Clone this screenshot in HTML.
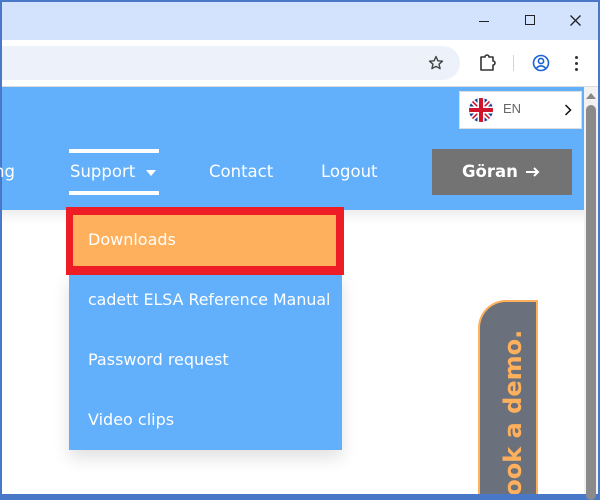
<!DOCTYPE html>
<html><head><meta charset="utf-8"><style>
*{margin:0;padding:0;box-sizing:border-box}
body{width:600px;height:496px;overflow:hidden;background:#4a78c8;position:relative;font-family:"DejaVu Sans","Liberation Sans",sans-serif}
.a{position:absolute}
.t{color:#fff;font-size:16px;white-space:nowrap}
</style></head><body>
<div class="a" style="left:2px;top:2px;width:596px;height:38px;background:#d3e3fd"></div>
<!-- window controls -->
<div class="a" style="left:479px;top:21px;width:10px;height:1px;background:#222"></div>
<div class="a" style="left:525px;top:15px;width:10px;height:10px;border:1.5px solid #222"></div>
<svg class="a" style="left:570px;top:15px" width="11" height="11"><path d="M0.5 0.5L10.5 10.5M10.5 0.5L0.5 10.5" stroke="#222" stroke-width="1.3"/></svg>
<!-- toolbar -->
<div class="a" style="left:2px;top:40px;width:596px;height:47px;background:#fff"></div>
<div class="a" style="left:2px;top:46px;width:458px;height:34px;background:#edf2fa;border-radius:0 17px 17px 0"></div>
<svg class="a" style="left:428px;top:55px" width="16" height="16" viewBox="0 0 16 16"><path d="M8 1.5l1.9 4.3 4.6.4-3.5 3 1.1 4.5L8 11.3 3.9 13.7 5 9.2 1.5 6.2l4.6-.4z" fill="none" stroke="#444" stroke-width="1.4" stroke-linejoin="round"/></svg>
<svg class="a" style="left:478px;top:53px" width="20" height="20" viewBox="0 0 20 20"><path d="M3 4h4a2 2 0 0 1 4 0h4v4a2 2 0 0 1 0 4v5H3z" fill="none" stroke="#333" stroke-width="1.6" stroke-linejoin="round"/></svg>
<div class="a" style="left:513px;top:55px;width:1px;height:16px;background:#c5d5ee"></div>
<svg class="a" style="left:531px;top:53px" width="20" height="20" viewBox="0 0 20 20"><circle cx="10" cy="10" r="7.5" fill="none" stroke="#1a63d4" stroke-width="1.6"/><circle cx="10" cy="8" r="2.6" fill="none" stroke="#1a63d4" stroke-width="1.6"/><path d="M5.5 15.2c2.5-3 6.5-3 9 0" fill="none" stroke="#1a63d4" stroke-width="1.6"/></svg>
<div class="a" style="left:575px;top:56px;width:3px;height:3px;border-radius:2px;background:#333;box-shadow:0 6px 0 #333,0 12px 0 #333"></div>
<div class="a" style="left:2px;top:86px;width:596px;height:1px;background:#dadce0"></div>
<!-- page -->
<div class="a" style="left:2px;top:87px;width:582px;height:407px;background:#fff"></div>
<div class="a" style="left:2px;top:87px;width:582px;height:123px;background:#62b0fb"></div>
<div class="a" style="left:2px;top:210px;width:582px;height:14px;background:linear-gradient(#eee,#fff)"></div>
<!-- scrollbar -->
<div class="a" style="left:584px;top:87px;width:14px;height:407px;background:#f1f1f1"></div>
<svg class="a" style="left:586px;top:93px" width="10" height="6"><path d="M0 6L5 0L10 6z" fill="#888"/></svg>
<div class="a" style="left:586px;top:105px;width:10px;height:395px;background:#8a8a8a;border-radius:5px"></div>
<!-- lang box -->
<div class="a" style="left:459px;top:91px;width:123px;height:38px;background:#fff;border:1px solid #ddd"></div>
<svg class="a" style="left:469px;top:98px" width="24" height="24" viewBox="0 0 24 24"><defs><clipPath id="c"><circle cx="12" cy="12" r="12"/></clipPath></defs><g clip-path="url(#c)"><rect width="24" height="24" fill="#1f3c8a"/><path d="M0 0L24 24M24 0L0 24" stroke="#fff" stroke-width="5"/><path d="M0 0L24 24M24 0L0 24" stroke="#cf142b" stroke-width="1.6"/><path d="M12 0V24M0 12H24" stroke="#fff" stroke-width="7"/><path d="M12 0V24M0 12H24" stroke="#cf142b" stroke-width="4"/></g></svg>
<div class="a" style="left:503px;top:101px;font-size:13px;color:#666;font-family:'Liberation Sans',sans-serif">EN</div>
<svg class="a" style="left:564px;top:104px" width="8" height="12"><path d="M1.5 1L6.5 6L1.5 11" fill="none" stroke="#111" stroke-width="1.5"/></svg>
<!-- nav -->
<div class="a t" style="left:-6px;top:162px;font-size:16.5px">ng</div>
<div class="a" style="left:69px;top:149px;width:90px;height:4px;background:#fff"></div>
<div class="a" style="left:69px;top:191px;width:90px;height:4px;background:#fff"></div>
<div class="a t" style="left:70px;top:162px;font-size:16.5px">Support</div>
<svg class="a" style="left:146px;top:170px" width="10" height="6"><path d="M0 0H10L5 6z" fill="#fff"/></svg>
<div class="a t" style="left:209px;top:162px;font-size:16.5px">Contact</div>
<div class="a t" style="left:321px;top:162px;font-size:16.5px">Logout</div>
<div class="a" style="left:432px;top:149px;width:140px;height:46px;background:#737373"></div>
<div class="a t" style="left:462px;top:162px;font-size:16.5px;font-weight:bold">Göran</div>
<svg class="a" style="left:525px;top:166px" width="16" height="12"><path d="M1 6H13M9 2L13 6L9 10" fill="none" stroke="#fff" stroke-width="2"/></svg>
<!-- dropdown -->
<div class="a" style="left:69px;top:273px;width:273px;height:177px;background:#62b0fb;box-shadow:0 8px 16px rgba(0,0,0,.12)"></div>
<div class="a" style="left:66px;top:207px;width:278px;height:68px;background:#ee1c25"></div>
<div class="a" style="left:73px;top:215px;width:263px;height:51px;background:#ffb05c"></div>
<div class="a t" style="left:88px;top:230px">Downloads</div>
<div class="a t" style="left:88px;top:290px;font-size:15.8px">cadett ELSA Reference Manual</div>
<div class="a t" style="left:88px;top:350px">Password request</div>
<div class="a t" style="left:88px;top:410px">Video clips</div>
<!-- demo tab -->
<div class="a" style="left:478px;top:300px;width:60px;height:194px;background:#6b717c;border:2px solid #ffb05c;border-right:none;border-bottom:none;border-radius:28px 0 0 0;overflow:hidden">
<div class="a" style="left:19px;top:212px;transform-origin:0 0;transform:rotate(-90deg);color:#ffb05c;font-weight:bold;font-size:24px;white-space:nowrap">Book a demo.</div>
</div>
<div class="a" style="left:536px;top:300px;width:2px;height:194px;background:#ffb05c"></div>
</body></html>
